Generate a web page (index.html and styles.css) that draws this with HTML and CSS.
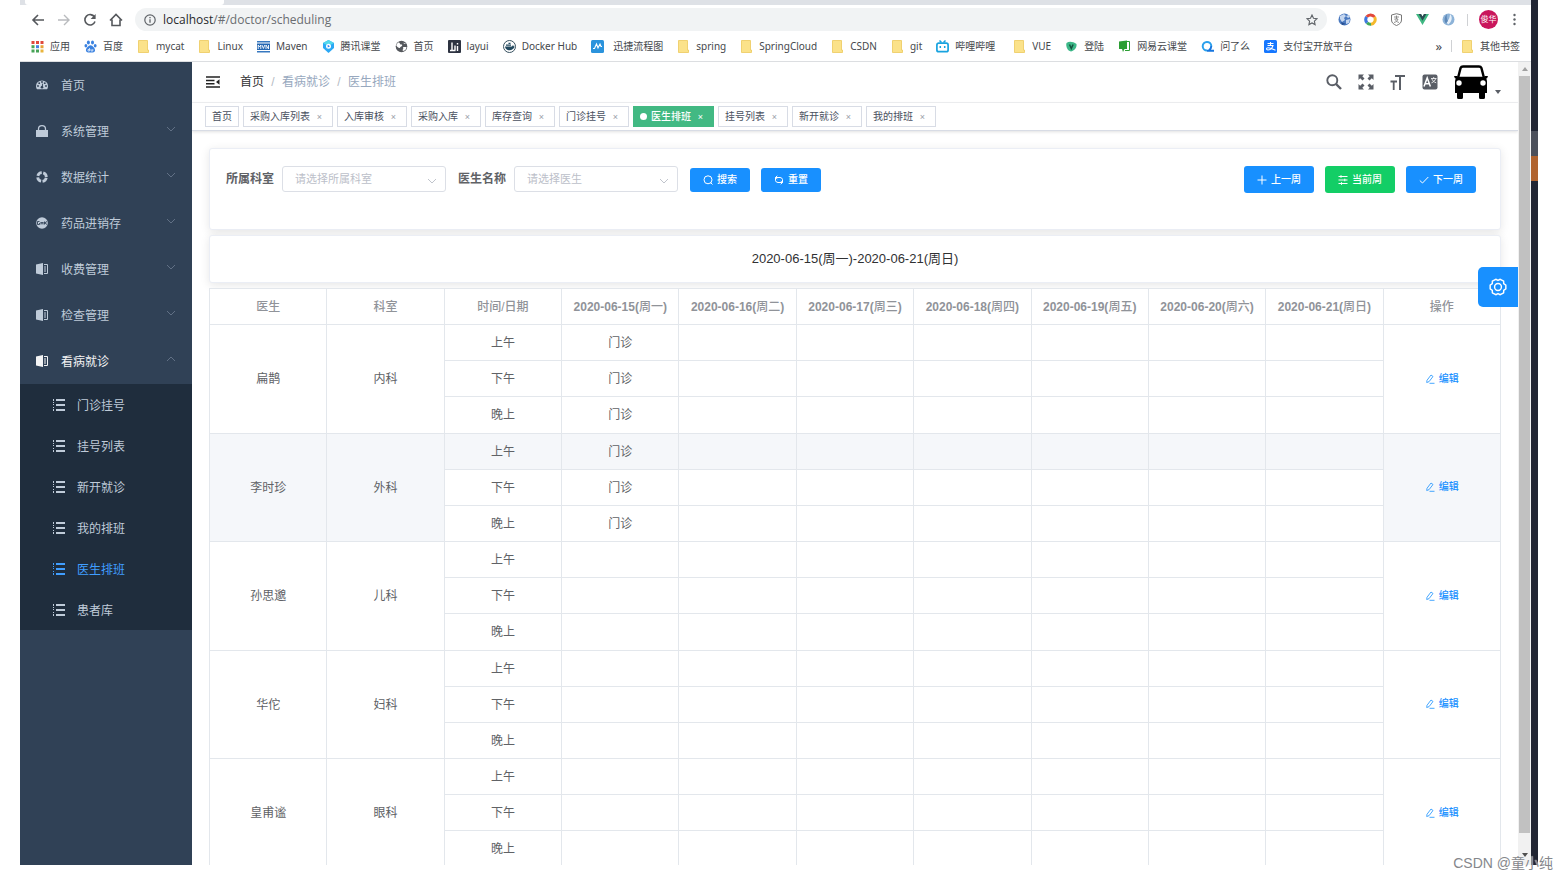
FILE: index.html
```html
<!DOCTYPE html>
<html lang="zh-CN">
<head>
<meta charset="utf-8">
<title>医生排班</title>
<link rel="stylesheet" href="styles.css">
</head>
<body>
<svg class="sprite" aria-hidden="true">
  <symbol id="folder" viewBox="0 0 13 13"><path d="M1.500.5h9v9.500h1v2.500h-10z" fill="#fbe28a" stroke="#ecc95c" stroke-width=".8"/></symbol>
  <symbol id="down" viewBox="0 0 10 6"><path d="M1 1l4 4 4-4" fill="none" stroke="currentColor"/></symbol>
  <symbol id="up" viewBox="0 0 10 6"><path d="M1 5l4-4 4 4" fill="none" stroke="currentColor"/></symbol>
  <symbol id="list" viewBox="0 0 12 12"><path d="M0 0h1v2H0zM3 0h9v2H3zM0 3h1v1H0zM0 5h1v1H0zM3 5h9v2H3zM0 8h1v1H0zM0 10h1v2H0zM3 10h9v2H3z" fill="currentColor"/></symbol>
  <symbol id="book" viewBox="0 0 12 12"><path d="M0 1.500L7 0v12L0 10.500z" fill="currentColor"/><path d="M8 1.500h3.500v9H8M8 4h2M8 6h2M8 8h2" fill="none" stroke="currentColor"/></symbol>
  <symbol id="edit" viewBox="0 0 10 10"><path d="M2 6.300L6 1l2 1.500-4 5.200-2.300.8zM4.500 9.300h5" fill="none" stroke="currentColor" stroke-width=".8"/></symbol>
</svg>
<div class="screen">
  <div class="browser">
    <div class="tabstrip"><div class="tabstrip-active"></div></div>
    <div class="toolbar">
      <button class="nav-btn" aria-label="后退"><svg viewBox="0 0 14 14"><path d="M13 7H2M7 2L2 7l5 5" fill="none" stroke="#55585c" stroke-width="1.600"/></svg></button>
      <button class="nav-btn" aria-label="前进"><svg viewBox="0 0 14 14"><path d="M1 7h11M7 2l5 5-5 5" fill="none" stroke="#b9bbbe" stroke-width="1.400"/></svg></button>
      <button class="nav-btn" aria-label="刷新"><svg viewBox="0 0 14 14"><path d="M11.500 4A5.200 5.200 0 1 0 12 8.500" fill="none" stroke="#55585c" stroke-width="1.600"/><path d="M12.600 1v5h-5z" fill="#55585c"/></svg></button>
      <button class="nav-btn" aria-label="主页"><svg viewBox="0 0 14 14"><path d="M1 7.500L7 1.500l6 6M3 6.500v6h8v-6" fill="none" stroke="#55585c" stroke-width="1.600"/></svg></button>
      <div class="omnibox">
        <svg class="i12" viewBox="0 0 12 12"><circle cx="6" cy="6" r="5.200" fill="none" stroke="#5f6368" stroke-width="1.200"/><path d="M6 5.200v3.600M6 3v1.300" stroke="#5f6368" stroke-width="1.300"/></svg>
        <span class="url"><b>localhost</b>/#/doctor/scheduling</span>
        <svg class="i12" viewBox="0 0 12 12"><path d="M6 1l1.500 3.300 3.500.4-2.600 2.400.7 3.500L6 8.900l-3.100 1.700.7-3.500L1 4.700l3.500-.4z" fill="none" stroke="#5f6368" stroke-width="1.100"/></svg>
      </div>
      <div class="extensions">
        <svg class="i13" viewBox="0 0 13 13"><circle cx="6.500" cy="6.500" r="6" fill="#4b7ac0"/><path d="M2 3l4-2 2 2-2 2 1 2-3 2-2-3zM8 7l4-1-1 4-3 1zM8 3l3-1 1 2-2 1z" fill="#c6d7ef"/><path d="M3 9l5 2-4 1z" fill="#284f91"/></svg>
        <svg class="i13" viewBox="0 0 13 13" fill="none" stroke-width="3"><path d="M2.700 3.800A4.800 4.800 0 0 1 10.500 4" stroke="#e2483b"/><path d="M10.500 4A4.800 4.800 0 0 1 7 11.200" stroke="#f5b92c"/><path d="M7 11.200A4.800 4.800 0 0 1 3 9.700" stroke="#40a85a"/><path d="M3 9.700a4.800 4.800 0 0 1-.3-5.900" stroke="#3d78df"/></svg>
        <svg class="i13" viewBox="0 0 13 13"><path d="M6.500.7l5 1.300v5c0 3-2.500 4.500-5 5.500-2.500-1-5-2.500-5-5.500V2z" fill="none" stroke="#777"/><path d="M4 4h5M6.500 2.500V6M4.500 6H8c-.5 2-2 3-4 3.500M5 6.500c1 1.500 2 2.500 4 3" fill="none" stroke="#777" stroke-width=".8"/></svg>
        <svg class="i13" viewBox="0 0 13 13"><path d="M0 1h5l1.500 2.500L8 1h5L6.500 12z" fill="#41b883"/><path d="M2.600 1H5l1.500 2.500L8 1h2.400L6.500 7.800z" fill="#2c4a52"/></svg>
        <svg class="i13" viewBox="0 0 13 13"><circle cx="6.500" cy="6.500" r="6" fill="#8db3d8"/><path d="M8 1c3 3 2 8-2 10.500L4.500 9C7 7 8 4 8 1z" fill="#e8f1fa"/><path d="M5 1C2 4 2 8 4 10.500L6 8C4.500 6 4.500 3 5 1z" fill="#5d88b8"/></svg>
        <i class="sep"></i>
        <span class="profile">俊华</span>
        <svg class="i13" viewBox="0 0 13 13" fill="#5f6368"><circle cx="6.500" cy="2" r="1.200"/><circle cx="6.500" cy="6.500" r="1.200"/><circle cx="6.500" cy="11" r="1.200"/></svg>
      </div>
    </div>
    <nav class="bookmarks">
      <a href="#"><svg viewBox="0 0 13 13"><path d="M.5 1h3v3h-3zM5 1h3v3H5zM9.500 1h3v3h-3z" fill="#e0493c"/><path d="M.5 5.200h3v3h-3z" fill="#4aa657"/><path d="M5 5.200h3v3H5z" fill="#4482e4"/><path d="M9.500 5.200h3v3h-3z" fill="#e7a33a"/><path d="M.5 9.500h3v3h-3zM5 9.500h3v3H5z" fill="#47a357"/><path d="M9.500 9.500h3v3h-3z" fill="#e9b43c"/></svg>应用</a>
      <a href="#"><svg viewBox="0 0 13 13" fill="#3b82e0"><ellipse cx="4.400" cy="2.600" rx="1.500" ry="2"/><ellipse cx="8.500" cy="2.600" rx="1.500" ry="2"/><ellipse cx="1.900" cy="5.800" rx="1.400" ry="1.800"/><ellipse cx="11.200" cy="5.800" rx="1.400" ry="1.800"/><path d="M6.500 5.200c2 0 5 3.300 4.500 5.500-.5 2-2.500 1.800-4.500 1.800S2.500 12.700 2 10.700C1.500 8.500 4.500 5.200 6.500 5.200z"/><path d="M5.500 8v3H4V9.500h1.500M7 9v2h1.800V9" fill="none" stroke="#fff" stroke-width=".7"/></svg>百度</a>
      <a href="#"><svg><use href="#folder"/></svg>mycat</a>
      <a href="#"><svg><use href="#folder"/></svg>Linux</a>
      <a href="#"><svg viewBox="0 0 13 13"><path d="M0 1h13v1.500H0zM0 11h13v1.500H0z" fill="#3778c0"/><path d="M0 3.500h13v6.500H0z" fill="#2567b2"/><path d="M1.200 9V5l1.300 2 1.300-2v4M5 5l1.400 3.500L7.800 5M9 9V5l2.500 4V5" fill="none" stroke="#fff" stroke-width=".9"/></svg>Maven</a>
      <a href="#"><svg viewBox="0 0 13 13"><path d="M6.500 0l5.500 3v5l-5.500 5L1 8V3z" fill="#2ba8f5"/><path d="M6.500 0L12 3 6.500 6 1 3z" fill="#54d8ec"/><circle cx="6.500" cy="6.200" r="2.500" fill="#fff"/><path d="M5.700 4.800l2.300 1.400-2.300 1.400z" fill="#2a7df0"/></svg>腾讯课堂</a>
      <a href="#"><svg viewBox="0 0 13 13"><circle cx="6.500" cy="6.500" r="5.800" fill="#55585d"/><path d="M3 2.500c3 0 1 2.500 4 2 1 2-2 2-2 3.500C3 8 1.500 6 1.200 5zM8 7h3.500c0 2.500-1.500 3.500-3.500 4-1-1.500 1-2 0-4zM8 1.500c0 2 2 1.500 3 2L9 4z" fill="#fff"/></svg>首页</a>
      <a href="#"><svg viewBox="0 0 13 13"><rect width="13" height="13" rx="1" fill="#2d3341"/><path d="M4 2.500V10.500M2 10.500h5.500M7 5.500v5M9.500 6v5M9.500 3v1.500" fill="none" stroke="#fff" stroke-width="1.400"/></svg>layui</a>
      <a href="#"><svg viewBox="0 0 13 13"><circle cx="6.500" cy="6.500" r="6" fill="#fff" stroke="#36505f"/><path d="M2 6.500h7l1-1.500.7 1.300 1 .2C10.500 9.500 8 10.700 5.500 10.200 3.500 10 2.200 8.500 2 6.500zM3 4.500h5v1.300H3zM5.500 2.800h2V4h-2z" fill="#22495f"/></svg>Docker Hub</a>
      <a class="wide-icon" href="#"><svg viewBox="0 0 13 13"><rect width="13" height="13" rx="1.500" fill="#2b93dc"/><path d="M2 8.500h1.500L5.500 4 7 8l2-4 1 2.500h1" fill="none" stroke="#fff" stroke-width="1.100"/></svg>迅捷流程图</a>
      <a href="#"><svg><use href="#folder"/></svg>spring</a>
      <a href="#"><svg><use href="#folder"/></svg>SpringCloud</a>
      <a href="#"><svg><use href="#folder"/></svg>CSDN</a>
      <a href="#"><svg><use href="#folder"/></svg>git</a>
      <a class="wide-end" href="#"><svg viewBox="0 0 13 13"><rect x=".9" y="3.100" width="11.200" height="8.600" rx="1.800" fill="#fff" stroke="#18a3df" stroke-width="1.700"/><path d="M3.500.5l2 2M9.500.5l-2 2M4.300 6v2M8.700 6v2" stroke="#18a3df" stroke-width="1.500"/></svg>哔哩哔哩</a>
      <a href="#"><svg><use href="#folder"/></svg>VUE</a>
      <a href="#"><svg viewBox="0 0 13 13"><path d="M1.500 3C4 1 8 1.500 11.500 4c.5 3-1.500 6.500-5.500 7.500C2.500 11 .5 6 1.500 3z" fill="#3cb888"/><path d="M4.500 4.500l1.800 4 1.800-4" fill="none" stroke="#16533f" stroke-width="1.500"/></svg>登陆</a>
      <a href="#"><svg viewBox="0 0 13 13"><path d="M1 1.500L9 .5V9H6.500l-1.500 3-1-3H1z" fill="#2c9e33"/><path d="M9 1.500h2.500v9H7" fill="none" stroke="#2c9e33"/></svg>网易云课堂</a>
      <a href="#"><svg viewBox="0 0 13 13" fill="none" stroke-width="2"><path d="M6 10.500a4.300 4.300 0 1 1 4.300-4.500" stroke="#2ba0ec"/><path d="M10.300 6c0 2-1 3.500-2.500 4.500M6 10.800h7" stroke="#1675df"/></svg>问了么</a>
      <a href="#"><svg viewBox="0 0 13 13"><rect width="13" height="13" rx="1.500" fill="#1677ff"/><path d="M3.500 3.500h6M6.500 2v3.500M3.500 5.500h5.500C8 9 6 10 4 10c-2 0-2-2.300 0-2.300 2 0 4 1.500 7.500 2.600" fill="none" stroke="#fff" stroke-width="1.100"/></svg>支付宝开放平台</a>
      <span class="more">»</span><i class="sep"></i>
      <a class="last" href="#"><svg><use href="#folder"/></svg>其他书签</a>
    </nav>
    <div class="page">
      <aside class="sidebar">
        <a class="item" href="#"><svg class="i12" viewBox="0 0 12 12"><path d="M0 7a6 5.500 0 0 1 12 0c0 1.500-.5 2.500-1 3.300H1C.5 9.500 0 8.500 0 7z" fill="currentColor"/><g fill="#304156"><circle cx="2" cy="7" r=".9"/><circle cx="3.200" cy="4.200" r=".9"/><circle cx="6" cy="3" r=".9"/><circle cx="8.800" cy="4.200" r=".9"/><circle cx="10" cy="7" r=".9"/><circle cx="6" cy="8.300" r="1.300"/><path d="M5.500 8l.9-3.500.7.200-.4 3.500z"/></g></svg><span>首页</span></a>
        <a class="item" href="#"><svg class="i12" viewBox="0 0 12 12"><path d="M0 5h12v7H0z" fill="currentColor"/><path d="M2.500 6V4a3.500 3.300 0 0 1 7 0v2" fill="none" stroke="currentColor" stroke-width="1.300"/></svg><span>系统管理</span><svg class="arrow"><use href="#down"/></svg></a>
        <a class="item" href="#"><svg class="i12" viewBox="0 0 12 12"><circle cx="6" cy="6" r="4.300" fill="none" stroke="currentColor" stroke-width="2.800" stroke-dasharray="5.250 1.500" stroke-dashoffset="-.75"/></svg><span>数据统计</span><svg class="arrow"><use href="#down"/></svg></a>
        <a class="item" href="#"><svg class="i12" viewBox="0 0 12 12"><circle cx="6" cy="6" r="5.800" fill="currentColor"/><path d="M1.500 4.500H3.500M1.500 4.500v3h2V6M5 7.500V5l1 1.500L7 5v2.500M8.500 4.500v3M8.500 6l2.500-1.500M9 6l2 1.500" fill="none" stroke="#304156" stroke-width=".9"/></svg><span>药品进销存</span><svg class="arrow"><use href="#down"/></svg></a>
        <a class="item" href="#"><svg class="i12"><use href="#book"/></svg><span>收费管理</span><svg class="arrow"><use href="#down"/></svg></a>
        <a class="item" href="#"><svg class="i12"><use href="#book"/></svg><span>检查管理</span><svg class="arrow"><use href="#down"/></svg></a>
        <a class="item open" href="#"><svg class="i12"><use href="#book"/></svg><span>看病就诊</span><svg class="arrow"><use href="#up"/></svg></a>
        <div class="submenu">
          <a href="#"><svg class="i12"><use href="#list"/></svg><span>门诊挂号</span></a>
          <a href="#"><svg class="i12"><use href="#list"/></svg><span>挂号列表</span></a>
          <a href="#"><svg class="i12"><use href="#list"/></svg><span>新开就诊</span></a>
          <a href="#"><svg class="i12"><use href="#list"/></svg><span>我的排班</span></a>
          <a class="current" href="#"><svg class="i12"><use href="#list"/></svg><span>医生排班</span></a>
          <a href="#"><svg class="i12"><use href="#list"/></svg><span>患者库</span></a>
        </div>
      </aside>
      <main class="main">
        <header class="navbar">
          <button class="hamburger" aria-label="折叠菜单"><svg viewBox="0 0 14 12"><path d="M0 1h14M0 4.500h8.500M0 7.800h8.500M0 11h14" stroke="#222" stroke-width="1.400"/><path d="M13.500 3.300v5.400L10 6z" fill="#222"/></svg></button>
          <nav class="crumbs"><a class="root" href="#">首页</a><i>/</i><span>看病就诊</span><i>/</i><span>医生排班</span></nav>
          <div class="tools">
            <button aria-label="搜索"><svg viewBox="0 0 16 16" fill="none" stroke="#5a5e66"><circle cx="6.300" cy="6.300" r="5" stroke-width="1.900"/><path d="M10 10l5 5" stroke-width="2.400"/></svg></button>
            <button aria-label="全屏"><svg viewBox="0 0 16 16"><path d="M.5.500H6L4.300 2.200l2.200 2.200-2 2-2.300-2.200L.5 6zM15.500.5V6l-1.700-1.800-2.300 2.200-2-2 2.200-2.200L10 .5zM.5 15.500V10l1.700 1.800 2.300-2.200 2 2-2.200 2.200L6 15.500zM15.500 15.500H10l1.700-1.700-2.200-2.200 2-2 2.300 2.200L15.500 10z" fill="#5a5e66"/></svg></button>
            <button aria-label="字号"><svg viewBox="0 0 16 16" fill="none" stroke="#5a5e66"><path d="M5 2h10M10 2v14" stroke-width="2"/><path d="M.5 7.500H7M3.700 7.500V16" stroke-width="1.800"/></svg></button>
            <button aria-label="语言"><svg viewBox="0 0 16 16"><rect x=".5" y=".5" width="15" height="15" rx="2" fill="#5a5e66"/><path d="M2 12.500L5.200 4l3.200 8.500M3.300 9.700h4" fill="none" stroke="#fff" stroke-width="1.500"/><path d="M9 4.500h5.500M11.700 3v1.500M13.700 4.500c-.5 2-2 3.500-4.200 4.300M9.800 4.700c.7 2 2 3.300 4.400 4.100" fill="none" stroke="#fff" stroke-width=".8"/></svg></button>
            <button class="avatar" aria-label="用户"><svg viewBox="0 0 34 34"><path d="M9 1.500h16c1.500 0 2 .5 2.400 1.500L30 13H4L6.600 3C7 2 7.500 1.500 9 1.500z" fill="#fff" stroke="#000" stroke-width="2.400"/><path d="M1 16.500c0-2.500 1.500-4.500 3.500-4.500h25c2 0 3.500 2 3.500 4.500V28h-2v4.500a1.500 1.500 0 0 1-1.500 1.500h-3a1.500 1.500 0 0 1-1.500-1.500V28H9v4.500A1.500 1.500 0 0 1 7.500 34h-3A1.500 1.500 0 0 1 3 32.500V28H1z"/><path d="M0 11h3.500v2.500H1zM34 11h-3.500v2.500H33z"/><circle cx="5" cy="18" r="2.700" fill="#fff"/><circle cx="29" cy="18" r="2.700" fill="#fff"/></svg><i class="caret"></i></button>
          </div>
        </header>
        <nav class="tags">
          <a href="#">首页</a>
          <a href="#">采购入库列表<b>×</b></a>
          <a href="#">入库审核<b>×</b></a>
          <a href="#">采购入库<b>×</b></a>
          <a href="#">库存查询<b>×</b></a>
          <a href="#">门诊挂号<b>×</b></a>
          <a class="active" href="#">医生排班<b>×</b></a>
          <a href="#">挂号列表<b>×</b></a>
          <a href="#">新开就诊<b>×</b></a>
          <a href="#">我的排班<b>×</b></a>
        </nav>
        <div class="content">
          <form class="card filter">
            <div class="field"><label for="dept">所属科室</label><div class="select"><select id="dept"><option>请选择所属科室</option></select><svg><use href="#down"/></svg></div></div>
            <div class="field"><label for="doctor">医生名称</label><div class="select"><select id="doctor"><option>请选择医生</option></select><svg><use href="#down"/></svg></div></div>
            <div class="actions">
              <button type="button" class="btn small"><svg viewBox="0 0 10 10"><circle cx="5" cy="4.800" r="4" fill="none" stroke="#fff"/><path d="M7.500 7.500L9.500 9.500" stroke="#fff"/></svg>搜索</button>
              <button type="button" class="btn small"><svg viewBox="0 0 10 10" fill="none" stroke="#fff"><path d="M1.500 5.500V2.500H6a2.500 2.500 0 0 1 2.500 2M8.500 4.500v3H4a2.500 2.500 0 0 1-2.500-2M3.300.8L1.500 2.500l1.800 1.300M6.700 6.200l1.800 1.300-1.800 1.700"/></svg>重置</button>
            </div>
            <div class="weeks">
              <button type="button" class="btn"><svg viewBox="0 0 10 10"><path d="M5 .5v9M.5 5h9" stroke="#fff"/></svg>上一周</button>
              <button type="button" class="btn green"><svg viewBox="0 0 10 10"><path d="M.5 1.500h9M.5 5h9M.5 8.500h9M3 .2v2.600M6.800 3.700v2.600M3.500 7.200v2.600" stroke="#fff"/></svg>当前周</button>
              <button type="button" class="btn"><svg viewBox="0 0 10 10"><path d="M.8 5.500l2.700 2.500L9.300 2" fill="none" stroke="#fff"/></svg>下一周</button>
            </div>
          </form>
          <div class="card range">2020-06-15(周一)-2020-06-21(周日)</div>
          <table class="schedule">
            <thead><tr><th><span>医生</span></th><th><span>科室</span></th><th><span>时间/日期</span></th><th>2020-06-15(<span>周一</span>)</th><th>2020-06-16(<span>周二</span>)</th><th>2020-06-17(<span>周三</span>)</th><th>2020-06-18(<span>周四</span>)</th><th>2020-06-19(<span>周五</span>)</th><th>2020-06-20(<span>周六</span>)</th><th>2020-06-21(<span>周日</span>)</th><th><span>操作</span></th></tr></thead>
            <tbody>
              <tr><td rowspan="3">扁鹊</td><td rowspan="3">内科</td><td>上午</td><td>门诊</td><td></td><td></td><td></td><td></td><td></td><td></td><td rowspan="3"><button class="edit"><svg><use href="#edit"/></svg>编辑</button></td></tr>
              <tr><td>下午</td><td>门诊</td><td></td><td></td><td></td><td></td><td></td><td></td></tr>
              <tr><td>晚上</td><td>门诊</td><td></td><td></td><td></td><td></td><td></td><td></td></tr>
            </tbody>
            <tbody>
              <tr class="hover"><td rowspan="3">李时珍</td><td rowspan="3">外科</td><td>上午</td><td>门诊</td><td></td><td></td><td></td><td></td><td></td><td></td><td rowspan="3"><button class="edit"><svg><use href="#edit"/></svg>编辑</button></td></tr>
              <tr><td>下午</td><td>门诊</td><td></td><td></td><td></td><td></td><td></td><td></td></tr>
              <tr><td>晚上</td><td>门诊</td><td></td><td></td><td></td><td></td><td></td><td></td></tr>
            </tbody>
            <tbody>
              <tr><td rowspan="3">孙思邈</td><td rowspan="3">儿科</td><td>上午</td><td></td><td></td><td></td><td></td><td></td><td></td><td></td><td rowspan="3"><button class="edit"><svg><use href="#edit"/></svg>编辑</button></td></tr>
              <tr><td>下午</td><td></td><td></td><td></td><td></td><td></td><td></td><td></td></tr>
              <tr><td>晚上</td><td></td><td></td><td></td><td></td><td></td><td></td><td></td></tr>
            </tbody>
            <tbody>
              <tr><td rowspan="3">华佗</td><td rowspan="3">妇科</td><td>上午</td><td></td><td></td><td></td><td></td><td></td><td></td><td></td><td rowspan="3"><button class="edit"><svg><use href="#edit"/></svg>编辑</button></td></tr>
              <tr><td>下午</td><td></td><td></td><td></td><td></td><td></td><td></td><td></td></tr>
              <tr><td>晚上</td><td></td><td></td><td></td><td></td><td></td><td></td><td></td></tr>
            </tbody>
            <tbody>
              <tr><td rowspan="3">皇甫谧</td><td rowspan="3">眼科</td><td>上午</td><td></td><td></td><td></td><td></td><td></td><td></td><td></td><td rowspan="3"><button class="edit"><svg><use href="#edit"/></svg>编辑</button></td></tr>
              <tr><td>下午</td><td></td><td></td><td></td><td></td><td></td><td></td><td></td></tr>
              <tr><td>晚上</td><td></td><td></td><td></td><td></td><td></td><td></td><td></td></tr>
            </tbody>
          </table>
        </div>
        <button class="settings" aria-label="设置"><svg viewBox="0 0 20 20" fill="none" stroke="#fff" stroke-width="1.600" stroke-linejoin="round"><path d="M18.700 7.800L16.300 6.300V3.500L12.500 1.400 10 2.700 7.500 1.400 3.700 3.500V6.300L1.300 7.800V12.200L3.700 13.700V16.500L7.500 18.600 10 17.300 12.500 18.600 16.300 16.500V13.700L18.700 12.200z"/><circle cx="10" cy="10" r="3.800"/></svg></button>
      </main>
      <div class="scrollbar"><i class="tri-up"></i><div class="thumb"></div><i class="tri-down"></i></div>
    </div>
  </div>
  <div class="edge"><i class="edge-gray"></i><i class="edge-orange"></i></div>
</div>
<div class="watermark">CSDN @童小纯</div>
</body>
</html>
```
FILE: styles.css
```css
* { box-sizing: border-box; }
body { margin: 0; background: #fff; overflow: hidden; font: 12px/16px "Liberation Sans", "Noto Sans CJK SC", sans-serif; color: #606266; }
a { color: inherit; text-decoration: none; }
i { font-style: normal; }
button { font: inherit; color: inherit; background: none; border: 0; padding: 0; margin: 0; cursor: pointer; }
svg { display: block; flex: none; }
.sprite { position: absolute; width: 0; height: 0; }
.i12 { width: 12px; height: 12px; }
.i13 { width: 13px; height: 13px; }
.sep { width: 1px; height: 12px; background: #cfd1d4; }

.screen { display: flex; height: calc(100vh - 14px); margin: 0 30px 14px 20px; }
.browser { flex: 1; min-width: 0; display: flex; flex-direction: column; }
.edge { width: 7px; background: #212533; padding-top: 131px; }
.edge i { display: block; height: 25px; }
.edge-gray { background: #4c505b; }
.edge-orange { background: #b0632f; }

.tabstrip { height: 5px; background: #dee1e6; padding-left: 5px; flex: none; }
.tabstrip-active { width: 199px; height: 5px; background: #fff; border-radius: 0 0 3px 3px; }
.toolbar { height: 29px; flex: none; display: flex; align-items: center; padding: 0 10px 0 11px; }
.nav-btn { width: 14px; margin-right: 12px; }
.nav-btn svg { width: 14px; height: 14px; }
.omnibox { flex: 1; height: 23px; border-radius: 12px; background: #f1f3f4; display: flex; align-items: center; padding: 0 9px; }
.url { flex: 1; padding-left: 7px; font-family: "Open Sans", "Noto Sans", sans-serif; color: #6a6d71; }
.url b { font-weight: 400; color: #28292c; }
.extensions { display: flex; align-items: center; gap: 13px; margin-left: 11px; }
.extensions .sep { margin: 0 -2px 0 -1px; }
.profile { width: 19px; height: 19px; margin-right: -3px; border-radius: 50%; background: #c9165c; color: #fff; font-size: 8px; line-height: 19px; text-align: center; }

.bookmarks { height: 28px; flex: none; border-bottom: 1px solid #dcdee1; display: flex; align-items: center; padding: 0 11px; padding-bottom: 3px; gap: 14px; font: 10px/14px "Noto Sans", "Noto Sans CJK SC", sans-serif; color: #45484c; white-space: nowrap; }
.bookmarks a { display: flex; align-items: center; gap: 6px; }
.bookmarks svg { width: 13px; height: 13px; }
.bookmarks .wide-icon { gap: 9px; }
.bookmarks .wide-end { margin-right: 4px; }
.bookmarks .more { margin-left: auto; font-size: 13px; }
.bookmarks .sep { margin: 0 -5px; }

.page { flex: 1; min-height: 0; display: flex; }
.sidebar { width: 172px; flex: none; background: #304156; color: #bfcbd9; }
.sidebar span { padding-top: 2px; }
.sidebar .item { display: flex; align-items: center; height: 46px; padding: 0 16px; gap: 13px; }
.sidebar .open { color: #f4f4f5; }
.arrow { width: 10px; height: 6px; margin: 0 0 4px auto; color: #617085; }
.submenu { background: #1f2d3d; }
.submenu a { display: flex; align-items: center; height: 41px; padding-left: 33px; gap: 12px; }
.submenu .current { color: #409eff; }

.main { flex: 1; min-width: 0; position: relative; overflow: hidden; display: flex; flex-direction: column; }
.navbar { height: 41px; flex: none; display: flex; align-items: center; padding: 0 17px 0 14px; border-bottom: 1px solid #f0f1f3; }
.hamburger svg { width: 14px; height: 12px; }
.crumbs { display: flex; margin-left: 20px; color: #97a8be; }
.crumbs .root { color: #303133; }
.crumbs i { width: 18px; text-align: center; color: #b5bac4; }
.tools { margin-left: auto; display: flex; align-items: center; gap: 16px; }
.tools svg { width: 16px; height: 16px; }
.tools .avatar { display: flex; align-items: flex-end; gap: 7px; }
.tools .avatar svg { width: 34px; height: 34px; }
.caret { border: 3px solid transparent; border-top: 4px solid #5a5e66; margin-bottom: 2px; }
.tags { height: 28px; flex: none; display: flex; align-items: center; gap: 4px; padding: 0 13px; border-bottom: 1px solid #d8dce5; box-shadow: 0 1px 3px rgba(0,0,0,.12); font-size: 10px; color: #495060; white-space: nowrap; }
.tags a { display: flex; align-items: center; height: 21px; padding: 0 6px; border: 1px solid #d8dce5; }
.tags b { width: 13px; margin-left: 3px; font-size: 9px; font-weight: 400; text-align: center; color: #9a9ea8; }
.tags .active { background: #42b983; border-color: #42b983; color: #fff; font-weight: 500; }
.tags .active b { color: #fff; }
.tags .active::before { content: ""; width: 7px; height: 7px; margin-right: 4px; border-radius: 50%; background: #fff; }

.content { padding: 17px; display: flex; flex-direction: column; gap: 5px; }
.card { border: 1px solid #ebeef5; border-radius: 3px; background: #fff; box-shadow: 0 2px 10px rgba(0,0,0,.1); }
.filter { height: 82px; display: flex; align-items: flex-start; gap: 12px; padding: 17px 24px 17px 16px; }
.field { display: flex; align-items: center; }
.field label { width: 56px; font-weight: 700; }
.select { position: relative; width: 164px; }
.select select { appearance: none; width: 100%; height: 26px; padding: 0 12px; border: 1px solid #dcdfe6; border-radius: 3px; background: #fff; color: #bcc0c9; font: inherit; font-size: 11px; }
.select svg { position: absolute; right: 9px; top: 12px; width: 10px; height: 6px; color: #c0c4cc; }
.actions { display: flex; gap: 11px; padding-top: 2px; }
.weeks { display: flex; gap: 11px; margin-left: auto; }
.btn { display: flex; align-items: center; justify-content: center; gap: 4px; width: 70px; height: 27px; border-radius: 3px; background: #1890ff; color: #fff; font-size: 10px; font-weight: 500; }
.btn svg { width: 10px; height: 10px; }
.btn.small { width: 60px; height: 24px; }
.btn.green { background: #13ce66; }
.range { height: 48px; line-height: 46px; font-size: 13px; text-align: center; color: #303133; }

.schedule { width: 100%; table-layout: fixed; border-collapse: separate; border-spacing: 0; border: 1px solid #e3e7ec; border-width: 1px 0 0 1px; background: #fff; }
.schedule th, .schedule td { height: 36px; padding: 0; border: 1px solid #e3e7ec; border-width: 0 1px 1px 0; text-align: center; line-height: 16px; white-space: nowrap; }
.schedule th { color: #909399; }
.schedule th span { font-weight: 500; }
.schedule tbody:nth-child(even) tr:last-child td { height: 37px; }
.schedule .hover td { background: #f5f7fa; }
.edit { display: inline-flex; align-items: center; gap: 4px; font-size: 10px; font-weight: 500; color: #1890ff; }
.edit svg { width: 10px; height: 10px; }
.settings { position: absolute; right: 0; top: 205px; width: 40px; height: 40px; border-radius: 5px 0 0 5px; background: #1890ff; display: flex; align-items: center; justify-content: center; }
.settings svg { width: 18px; height: 18px; }

.scrollbar { width: 13px; flex: none; background: #f1f1f1; display: flex; flex-direction: column; align-items: center; padding: 2px 0 5px; }
.tri-up { border: 3px solid transparent; border-bottom: 4px solid #a0a0a0; margin-bottom: 5px; }
.thumb { flex: 1; width: 11px; background: #c1c1c1; margin-bottom: 20px; }
.tri-down { border: 3px solid transparent; border-top: 4px solid #505050; }
.watermark { position: absolute; right: 15px; bottom: 6px; font-size: 14px; line-height: 20px; color: #85878b; text-shadow: 0 0 1px #fff; }
```
